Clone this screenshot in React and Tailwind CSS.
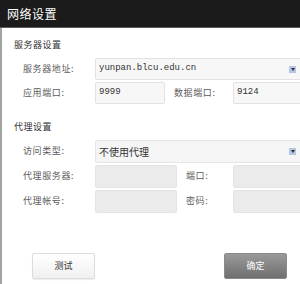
import React from 'react';

const FONT = { fontFamily: '"Noto Sans CJK SC", "Noto Sans", sans-serif' };
const MONO = { fontFamily: '"Liberation Mono", "Noto Sans CJK SC", monospace' };

function Label({ w, children, className = '' }) {
  return (
    <div className={`${w} shrink-0 text-[9px] tracking-[0.6px] text-[#5c5c5c] leading-[22px] ${className}`}>{children}</div>
  );
}

function Field({ w, value, disabled, h = 'h-[22px]' }) {
  return (
    <div
      className={`${w} ${h} shrink-0 rounded-[2px] border px-[3px] flex items-center text-[9px] text-[#333] ${
        disabled ? 'bg-[#ebebeb] border-[#e4e4e4]' : 'bg-[#f7f7f7] border-[#e2e2e2]'
      }`}
      style={MONO}
    >
      {value}
    </div>
  );
}

function Arrow() {
  return (
    <div className="w-[7px] h-[7px] bg-[#b3c6e6] flex items-center justify-center">
      <div className="w-0 h-0 border-l-[2px] border-r-[2px] border-t-[3px] border-l-transparent border-r-transparent border-t-[#333]" />
    </div>
  );
}

export default function App() {
  return (
    <div className="w-[300px] h-[284px] overflow-hidden bg-white" style={FONT}>
      {/* title bar */}
      <div className="h-[28px] bg-[#1b1b1b] border-b border-[#5a5a5a] text-white text-[12px] tracking-[0.5px] leading-[27px] pl-[7px]">
        网络设置
      </div>

      <div className="h-[256px] border-l-2 border-[#a3a3a3] pl-[12px] pt-[10px]">
        <div className="text-[9px] tracking-[0.5px] leading-[14px] text-[#333]">服务器设置</div>

        <div className="mt-[6px] pl-[9px] w-[300px] flex flex-col gap-[2px]">
          <div className="flex">
            <Label w="w-[72px]">服务器地址:</Label>
            <div className="w-[208px] h-[22px] shrink-0 rounded-[2px] border border-[#e2e2e2] bg-[#f7f7f7] pl-[3px] pr-[6px] flex items-center justify-between">
              <span className="text-[9px] text-[#333]" style={MONO}>yunpan.blcu.edu.cn</span>
              <Arrow />
            </div>
          </div>
          <div className="flex">
            <Label w="w-[72px]">应用端口:</Label>
            <Field w="w-[70px]" value="9999" />
            <Label w="w-[59px]" className="ml-[9px]">数据端口:</Label>
            <Field w="w-[80px]" value="9124" />
          </div>
        </div>

        <div className="mt-[16px] text-[9px] tracking-[0.5px] leading-[14px] text-[#333]">代理设置</div>

        <div className="mt-[6px] pl-[9px] w-[300px] flex flex-col gap-[2px]">
          <div className="flex">
            <Label w="w-[72px]">访问类型:</Label>
            <div className="w-[208px] h-[23px] shrink-0 rounded-[2px] border border-[#e6e6e6] bg-[#f5f5f5] pl-[3px] pr-[6px] flex items-center justify-between">
              <span className="text-[10px] text-[#333]">不使用代理</span>
              <Arrow />
            </div>
          </div>
          <div className="flex">
            <Label w="w-[72px]">代理服务器:</Label>
            <Field w="w-[82px]" h="h-[23px]" disabled />
            <Label w="w-[47px]" className="ml-[9px]">端口:</Label>
            <Field w="w-[80px]" h="h-[23px]" disabled />
          </div>
          <div className="flex">
            <Label w="w-[72px]">代理帐号:</Label>
            <Field w="w-[82px]" h="h-[23px]" disabled />
            <Label w="w-[47px]" className="ml-[9px]">密码:</Label>
            <Field w="w-[80px]" h="h-[23px]" disabled />
          </div>
        </div>

        <div className="mt-[40px] flex">
          <button className="ml-[18px] w-[63px] h-[26px] rounded-[2px] border border-[#dcdcdc] bg-gradient-to-b from-white to-[#f0f0f0] text-[9px] text-[#333] shadow-[0_1px_1px_rgba(0,0,0,0.08)]">
            测试
          </button>
          <button className="ml-[129px] w-[63px] h-[26px] rounded-[2px] border border-[#8a8a8a] bg-gradient-to-b from-[#9a9a9a] to-[#6f6f6f] text-[9px] text-white">
            确定
          </button>
        </div>
      </div>
    </div>
  );
}
